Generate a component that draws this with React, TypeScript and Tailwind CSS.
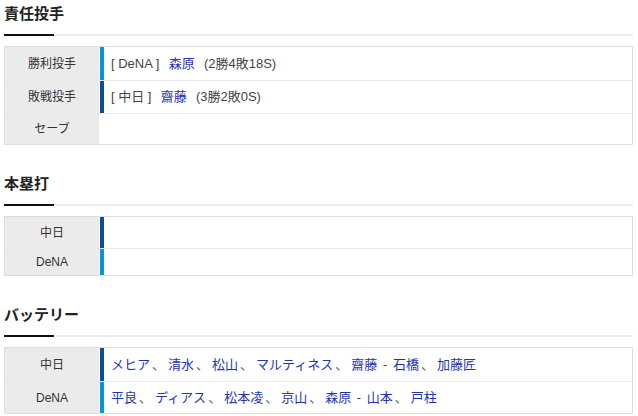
import React from 'react';

type Part = { text: string; link?: boolean; kind?: 'sep' | 'dash' | 'pad' };

interface Row {
  label: string;
  bar?: 'dena' | 'chunichi';
  height: string;
  parts: Part[];
}

const barClass = {
  dena: 'bg-[#0596d9]',
  chunichi: 'bg-[#0d4f94]',
};

const partClass = (p: Part) => {
  if (p.link) return p.kind === 'pad' ? 'mx-[2px] text-[#1f33b3]' : 'text-[#1f33b3]';
  if (p.kind === 'sep') return 'ml-[2px] mr-[3px] text-[#555]';
  if (p.kind === 'dash') return 'mx-[2px]';
  return '';
};

const Section: React.FC<{ title: string; rows: Row[] }> = ({ title, rows }) => (
  <section>
    <h2 className="pt-[3px] text-[15px] font-bold leading-[22px] text-[#222]">{title}</h2>
    <div className="mt-[9px] h-[2px] bg-[#eeeeee]">
      <div className="h-full w-[50px] bg-[#111]" />
    </div>
    <div className="mt-[10px] border border-[#dddddd]">
      {rows.map((row, idx) => (
        <div
          key={idx}
          className={`flex ${row.height} ${idx > 0 ? 'border-t border-[#e9e9e9]' : ''}`}
        >
          <div className="flex w-[95px] items-center justify-center border-r border-white bg-[#ebebeb] text-[12px] text-[#333]">
            {row.label}
          </div>
          <div className={`w-[4px] ${row.bar ? barClass[row.bar] : 'bg-white'}`} />
          <div className="flex flex-1 items-center whitespace-pre pl-[7px] text-[13px] text-[#444]">
            {row.parts.map((p, i) => (
              <span key={i} className={partClass(p)}>
                {p.text}
              </span>
            ))}
          </div>
        </div>
      ))}
    </div>
  </section>
);

const sep: Part = { text: '、', kind: 'sep' };
const dash: Part = { text: ' - ', kind: 'dash' };
const name = (text: string): Part => ({ text, link: true });

export default function App() {
  return (
    <div
      className="min-h-[416px] bg-white pl-[4px] pr-[5px]"
      style={{ fontFamily: '"Liberation Sans", "Noto Sans CJK JP", sans-serif' }}
    >
      <Section
        title="責任投手"
        rows={[
          {
            label: '勝利投手',
            bar: 'dena',
            height: 'h-[33px]',
            parts: [
              { text: '[ DeNA ]  ' },
              { text: '森原', link: true, kind: 'pad' },
              { text: '  (2勝4敗18S)' },
            ],
          },
          {
            label: '敗戦投手',
            bar: 'chunichi',
            height: 'h-[33px]',
            parts: [
              { text: '[ 中日 ]  ' },
              { text: '齋藤', link: true, kind: 'pad' },
              { text: '  (3勝2敗0S)' },
            ],
          },
          { label: 'セーブ', height: 'h-[31px]', parts: [] },
        ]}
      />
      <div className="h-[25px]" />
      <Section
        title="本塁打"
        rows={[
          { label: '中日', bar: 'chunichi', height: 'h-[31px]', parts: [] },
          { label: 'DeNA', bar: 'dena', height: 'h-[27px]', parts: [] },
        ]}
      />
      <div className="h-[25px]" />
      <Section
        title="バッテリー"
        rows={[
          {
            label: '中日',
            bar: 'chunichi',
            height: 'h-[33px]',
            parts: [
              name('メヒア'),
              sep,
              name('清水'),
              sep,
              name('松山'),
              sep,
              name('マルティネス'),
              sep,
              name('齋藤'),
              dash,
              name('石橋'),
              sep,
              name('加藤匠'),
            ],
          },
          {
            label: 'DeNA',
            bar: 'dena',
            height: 'h-[32px]',
            parts: [
              name('平良'),
              sep,
              name('ディアス'),
              sep,
              name('松本凌'),
              sep,
              name('京山'),
              sep,
              name('森原'),
              dash,
              name('山本'),
              sep,
              name('戸柱'),
            ],
          },
        ]}
      />
    </div>
  );
}
